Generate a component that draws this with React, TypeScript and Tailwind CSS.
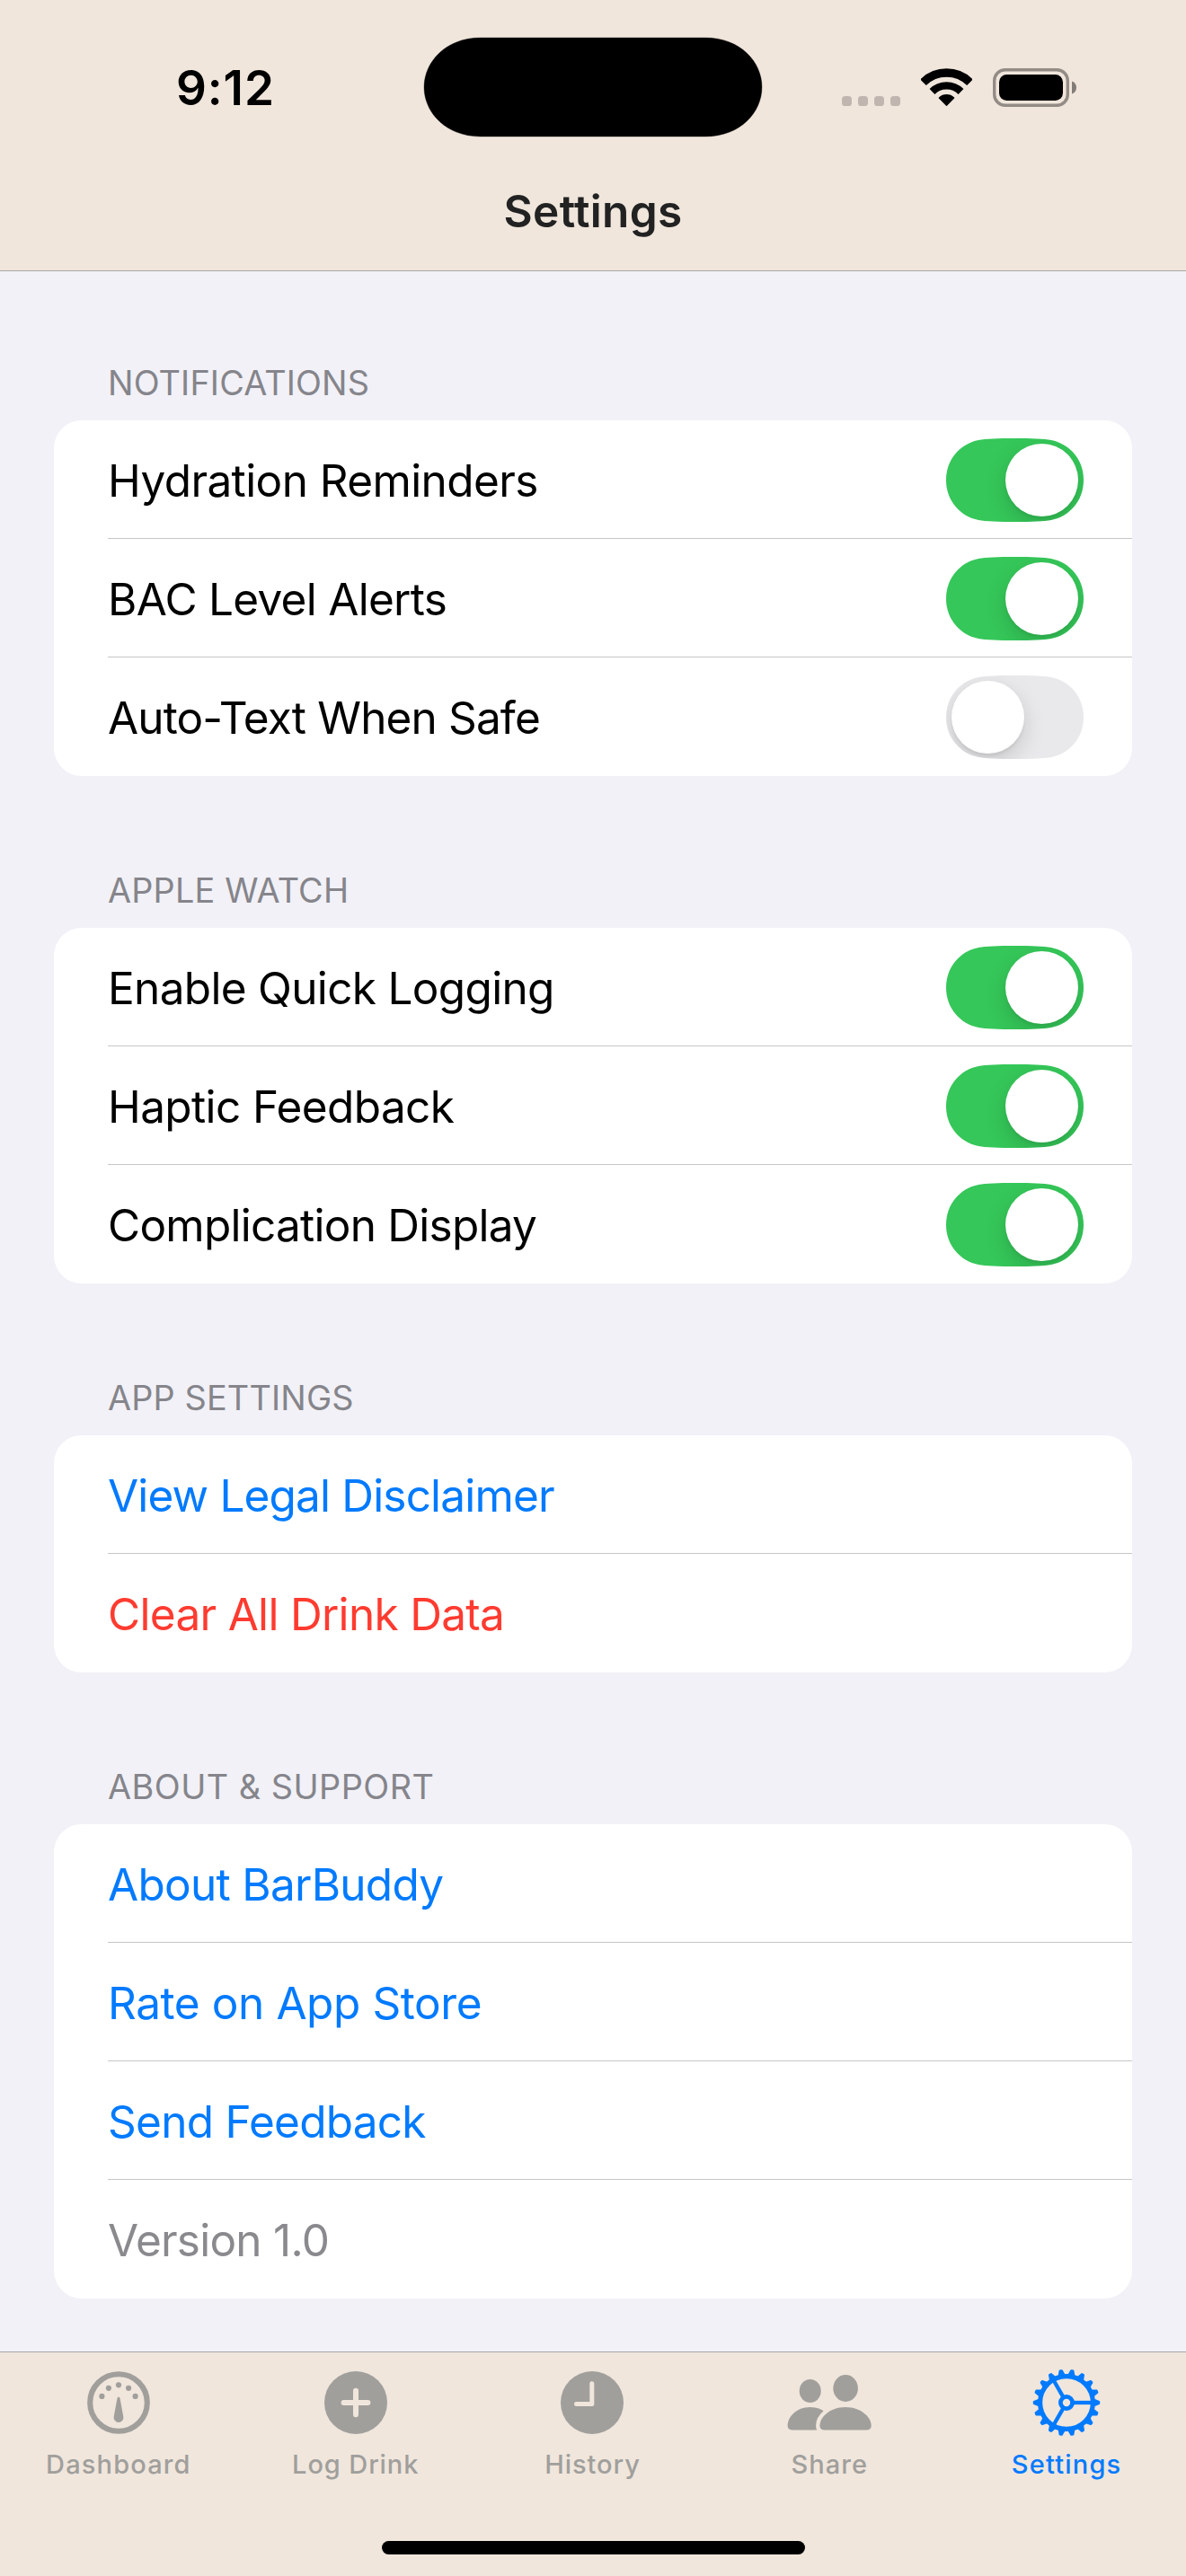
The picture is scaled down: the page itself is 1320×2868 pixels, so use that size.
import type { ReactNode } from "react";

type Row = { label: string; className: string; toggle?: boolean };
type Section = { title: string; titleClass: string; rows: Row[] };

const SECTIONS: Section[] = [
  {
    title: "NOTIFICATIONS",
    titleClass: "tracking-[0.15px]",
    rows: [
      { label: "Hydration Reminders", className: "tracking-[-0.6px] text-black", toggle: true },
      { label: "BAC Level Alerts", className: "tracking-[-0.72px] text-black", toggle: true },
      { label: "Auto-Text When Safe", className: "tracking-[-0.86px] text-black", toggle: false },
    ],
  },
  {
    title: "APPLE WATCH",
    titleClass: "tracking-[0.2px]",
    rows: [
      { label: "Enable Quick Logging", className: "tracking-[-0.68px] text-black", toggle: true },
      { label: "Haptic Feedback", className: "tracking-[-0.62px] text-black", toggle: true },
      { label: "Complication Display", className: "tracking-[-0.75px] text-black", toggle: true },
    ],
  },
  {
    title: "APP SETTINGS",
    titleClass: "tracking-[0.15px]",
    rows: [
      { label: "View Legal Disclaimer", className: "tracking-[-0.83px] text-[#007aff]" },
      { label: "Clear All Drink Data", className: "tracking-[-0.7px] text-[#ff3b30]" },
    ],
  },
  {
    title: "ABOUT & SUPPORT",
    titleClass: "tracking-[0.48px]",
    rows: [
      { label: "About BarBuddy", className: "tracking-[-0.72px] text-[#007aff]" },
      { label: "Rate on App Store", className: "tracking-[-0.42px] text-[#007aff]" },
      { label: "Send Feedback", className: "tracking-[-0.74px] text-[#007aff]" },
      { label: "Version 1.0", className: "tracking-[-0.76px] text-[#8a8a8e]" },
    ],
  },
];

function CellularIcon() {
  return (
    <svg width="65" height="43" viewBox="0 0 65 43" fill="#c1b6af">
      {[0, 18, 36, 54].map((x) => (
        <rect key={x} x={x} y="31" width="11" height="11" rx="3.6" />
      ))}
    </svg>
  );
}

function WifiIcon() {
  return (
    <svg width="57" height="43" viewBox="0 0 57 43" fill="none" stroke="#000">
      <path d="M2.5 15.7A37 37 0 0 1 54.5 15.7" strokeWidth="9.3" />
      <path d="M12.5 26A22.8 22.8 0 0 1 44.5 26" strokeWidth="8.3" />
      <path d="M28.5 41.2 20.4 33A11.8 11.8 0 0 1 36.6 33Z" fill="#000" strokeWidth="1.4" strokeLinejoin="round" />
    </svg>
  );
}

function BatteryIcon() {
  return (
    <svg width="93" height="43" viewBox="0 0 93 43">
      <rect x="1.7" y="1.7" width="81.6" height="39.6" rx="12" fill="none" stroke="#938c86" strokeWidth="3.4" />
      <rect x="7" y="7" width="71" height="29" rx="8.5" fill="#000" />
      <path d="M88 14.5C91 15.5 93 18 93 21.5S91 27.5 88 28.5Z" fill="#827c76" />
    </svg>
  );
}

function Toggle({ on }: { on: boolean }) {
  return (
    <button
      role="switch"
      aria-checked={on}
      className={`flex h-[93px] w-[153px] shrink-0 items-center px-1.5 [clip-path:path('M0_46.5C0_23_16_6_36_2C44_0.5_58_0_76.5_0S109_0.5_117_2C137_6_153_23_153_46.5S137_87_117_91C109_92.5_95_93_76.5_93S44_92.5_36_91C16_87_0_70_0_46.5Z')] ${
        on ? "justify-end bg-[#35c759]" : "justify-start bg-[#e9e9eb]"
      }`}
    >
      <span className="size-[81px] rounded-full bg-white shadow-[0_9px_24px_rgba(0,0,0,0.15),0_3px_3px_rgba(0,0,0,0.05)]" />
    </button>
  );
}

function SettingsSection({ section }: { section: Section }) {
  return (
    <section>
      <h2 className={`mb-[18px] pl-[60px] text-[37.8px] leading-[48px] text-[#85858b] ${section.titleClass}`}>
        {section.title}
      </h2>
      <ul className="overflow-hidden rounded-[31px] bg-white pl-[60px]">
        {section.rows.map((row, i) => (
          <li
            key={row.label}
            className={`flex h-[132px] items-center justify-between pr-[54px] ${
              i < section.rows.length - 1 ? "border-b border-[#c6c6c8]" : "pb-px"
            }`}
          >
            <span className={`pt-[3px] text-[49.5px] leading-[60px] ${row.className}`}>{row.label}</span>
            {row.toggle !== undefined && (
              <span className="pt-[2px]">
                <Toggle on={row.toggle} />
              </span>
            )}
          </li>
        ))}
      </ul>
    </section>
  );
}

function DashboardIcon() {
  return (
    <svg width="76" height="76" viewBox="-38 -38 76 76" fill="currentColor">
      <circle r="31.8" fill="none" stroke="currentColor" strokeWidth="6.1" />
      {[[0, -19.7], [-11.1, -16.2], [11.1, -16.2], [-18.6, -7.1], [18.6, -7.1]].map(([x, y]) => (
        <circle key={`${x}`} cx={x} cy={y} r="3.1" />
      ))}
      <path d="M-1.6 -4.6C-1.4 -6.9 1.4 -6.9 1.6 -4.6L5.3 15.6A5.4 5.4 0 1 1 -5.3 15.6Z" />
    </svg>
  );
}

function PlusCircleIcon() {
  return (
    <svg width="76" height="76" viewBox="-38 -38 76 76" fill="currentColor">
      <circle r="35" />
      <path d="M-13.4 0H13.4M0 -13.3V13.3" stroke="#f0e6dc" strokeWidth="6" strokeLinecap="round" />
    </svg>
  );
}

function ClockIcon() {
  return (
    <svg width="76" height="76" viewBox="-38 -38 76 76" fill="currentColor">
      <circle r="35" />
      <path d="M-.2 -21.3V1.6H-17.5" fill="none" stroke="#f0e6dc" strokeWidth="5" strokeLinecap="round" strokeLinejoin="round" />
    </svg>
  );
}

function PeopleIcon() {
  return (
    <svg width="96" height="76" viewBox="-48 -38 96 76" fill="currentColor">
      <path d="M-41.3 30.5C-44.6 30.5 -46.4 28.8 -46.4 25.6C-46.4 16 -36.5 5 -21.4 5S3.6 16 3.6 25.6C3.6 28.8 1.8 30.5 -1.5 30.5Z" />
      <path
        d="M-5 30.5C-8.7 30.5 -10.6 28.9 -10.6 25.7C-10.6 16.5 .4 5 18 5S46.7 16.5 46.7 25.7C46.7 28.9 44.8 30.5 41 30.5Z"
        stroke="#f0e6dc"
        strokeWidth="8.6"
        paintOrder="stroke"
      />
      <ellipse cx="-21.3" cy="-13" rx="12" ry="13" />
      <ellipse cx="18.1" cy="-16" rx="13.8" ry="15" />
    </svg>
  );
}

const TEETH = Array.from({ length: 18 }, (_, i) => i * 20);

function GearIcon() {
  return (
    <svg width="76" height="76" viewBox="-38 -38 76 76" fill="none" stroke="currentColor">
      <circle r="29.4" strokeWidth="5.2" />
      <circle r="6.6" strokeWidth="4.8" />
      {[0, 120, 240].map((a) => (
        <path key={a} d="M8 0H28" strokeWidth="4.3" transform={`rotate(${a})`} />
      ))}
      {TEETH.map((a) => (
        <path
          key={a}
          d="M30.5 -3.2L36.2 -1.1V1.1L30.5 3.2Z"
          fill="currentColor"
          strokeWidth="2"
          strokeLinejoin="round"
          transform={`rotate(${a})`}
        />
      ))}
    </svg>
  );
}

const TABS: { label: string; icon: ReactNode; className: string }[] = [
  { label: "Dashboard", icon: <DashboardIcon />, className: "tracking-[1.15px] text-[#a09f9c]" },
  { label: "Log Drink", icon: <PlusCircleIcon />, className: "tracking-[0.9px] text-[#a09f9c]" },
  { label: "History", icon: <ClockIcon />, className: "tracking-[0.95px] text-[#a09f9c]" },
  { label: "Share", icon: <PeopleIcon />, className: "tracking-[1px] text-[#a09f9c]" },
  { label: "Settings", icon: <GearIcon />, className: "tracking-[1.2px] text-[#007aff]" },
];

export default function App() {
  return (
    <div className="flex h-[2868px] w-[1320px] flex-col overflow-hidden bg-[#f2f1f7] font-['Inter',sans-serif]">
      <header className="h-[302px] shrink-0 border-b border-[#aaa6a5] bg-[#f0e6dc] pt-[41px]">
        <div className="flex h-28 items-center">
          <div className="w-[471px] pt-0.5 pl-[196px] text-[53px] leading-[64px] font-semibold tracking-[0.9px] text-black">
            9:12
          </div>
          <svg width="378" height="112" viewBox="-1 -1 378 112">
            <path
              d="M0 55C0 27 24 0 63 0H313C352 0 376 27 376 55S352 110 313 110H63C24 110 0 83 0 55Z"
              stroke="#000"
              strokeOpacity=".35"
              strokeWidth="1"
            />
          </svg>
          <div className="flex gap-[23px] pl-[88px]">
            <CellularIcon />
            <WifiIcon />
            <BatteryIcon />
          </div>
        </div>
        <h1 className="mt-[49px] text-center text-[49.5px] leading-[66px] font-semibold tracking-[0.35px] text-[#222]">
          Settings
        </h1>
      </header>

      <main className="flex flex-1 flex-col gap-[103px] px-[60px] pt-[100px]">
        {SECTIONS.map((section) => (
          <SettingsSection key={section.title} section={section} />
        ))}
      </main>

      <nav className="flex h-[250px] shrink-0 flex-col border-t border-[#a8a5aa] bg-[#f0e6dc] pt-[18px]">
        <div className="grid grid-cols-5 pr-px">
          {TABS.map((tab) => (
            <a key={tab.label} className={`flex flex-col items-center ${tab.className}`}>
              {tab.icon}
              <span className="mt-[13px] text-[29px] leading-[36px] font-medium">{tab.label}</span>
            </a>
          ))}
        </div>
        <div className="mt-[67px] ml-[425px] h-[15px] w-[471px] rounded-full bg-black" />
      </nav>
    </div>
  );
}
